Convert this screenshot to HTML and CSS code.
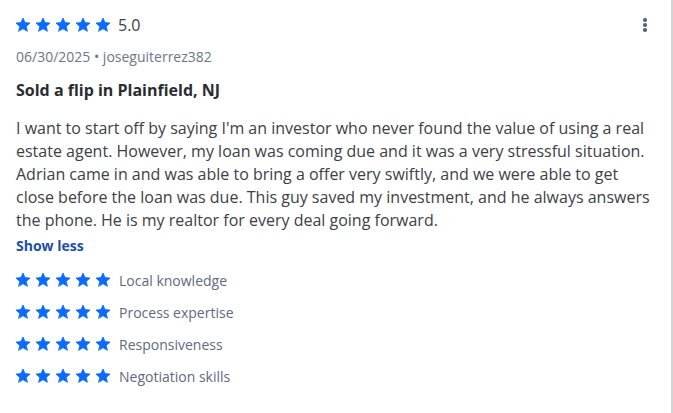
FILE: index.html
```html
<!DOCTYPE html>
<html>
<head>
<meta charset="utf-8">
<link rel="stylesheet" href="styles.css">
</head>
<body>
<div class="card">
  <svg width="0" height="0" class="defs">
    <defs>
      <symbol id="star" viewBox="0 0 24 24">
        <path d="M12 1.5l3.1 6.9 7.4.7-5.6 5 1.7 7.4L12 17.6l-6.6 3.9 1.7-7.4-5.6-5 7.4-.7z" fill="#0b6bff" stroke="#0b6bff" stroke-width="1.2" stroke-linejoin="round"/>
      </symbol>
    </defs>
  </svg>
  <div class="top">
    <div class="stars">
      <svg class="star"><use href="#star"/></svg>
      <svg class="star"><use href="#star"/></svg>
      <svg class="star"><use href="#star"/></svg>
      <svg class="star"><use href="#star"/></svg>
      <svg class="star"><use href="#star"/></svg>
      <span class="score">5.0</span>
    </div>
    <div class="kebab"><span></span><span></span><span></span></div>
  </div>
  <div class="meta">06/30/2025 • joseguiterrez382</div>
  <h2 class="title">Sold a flip in Plainfield, NJ</h2>
  <p class="body">I want to start off by saying I'm an investor who never found the value of using a real estate agent. However, my loan was coming due and it was a very stressful situation. Adrian came in and was able to bring a offer very swiftly, and we were able to get close before the loan was due. This guy saved my investment, and he always answers the phone. He is my realtor for every deal going forward.</p>
  <a class="toggle">Show less</a>
  <ul class="criteria">
    <li><span class="stars"><svg class="star"><use href="#star"/></svg><svg class="star"><use href="#star"/></svg><svg class="star"><use href="#star"/></svg><svg class="star"><use href="#star"/></svg><svg class="star"><use href="#star"/></svg></span><span class="label">Local knowledge</span></li>
    <li><span class="stars"><svg class="star"><use href="#star"/></svg><svg class="star"><use href="#star"/></svg><svg class="star"><use href="#star"/></svg><svg class="star"><use href="#star"/></svg><svg class="star"><use href="#star"/></svg></span><span class="label">Process expertise</span></li>
    <li><span class="stars"><svg class="star"><use href="#star"/></svg><svg class="star"><use href="#star"/></svg><svg class="star"><use href="#star"/></svg><svg class="star"><use href="#star"/></svg><svg class="star"><use href="#star"/></svg></span><span class="label">Responsiveness</span></li>
    <li><span class="stars"><svg class="star"><use href="#star"/></svg><svg class="star"><use href="#star"/></svg><svg class="star"><use href="#star"/></svg><svg class="star"><use href="#star"/></svg><svg class="star"><use href="#star"/></svg></span><span class="label">Negotiation skills</span></li>
  </ul>
</div>
</body>
</html>
```
FILE: styles.css
```css
html, body {
  margin: 0;
  padding: 0;
  background: #fff;
}
body {
  font-family: "Open Sans", "Noto Sans", sans-serif;
  color: #3d4047;
}
.defs {
  position: absolute;
  width: 0;
  height: 0;
}
.card {
  box-sizing: border-box;
  width: 673px;
  height: 413px;
  border-right: 2px solid #d4d4d4;
  padding: 13px 0 0 15px;
}
.top {
  display: flex;
  align-items: center;
  justify-content: space-between;
  height: 24px;
  padding-right: 15px;
}
.stars {
  display: flex;
  align-items: center;
  gap: 4px;
}
.star {
  width: 16px;
  height: 16px;
  display: block;
}
.score {
  margin-left: 3px;
  font-size: 16px;
  color: #3d4047;
}
.kebab {
  display: flex;
  flex-direction: column;
  gap: 1.5px;
  width: 16px;
  align-items: center;
  margin-right: 3px;
}
.kebab span {
  width: 3.5px;
  height: 3.5px;
  border-radius: 50%;
  background: #56647a;
}
.meta {
  margin-top: 10px;
  padding-left: 1px;
  font-size: 14px;
  line-height: 20px;
  color: #6a768a;
}
.title {
  margin: 12px 0 0;
  padding-left: 1px;
  font-size: 16px;
  line-height: 22px;
  font-weight: 700;
  color: #2a2c31;
}
.body {
  margin: 16px 0 0;
  padding-left: 1px;
  width: 636px;
  font-size: 16px;
  line-height: 23px;
  color: #3d4047;
}
.toggle {
  display: block;
  margin-top: 4px;
  padding-left: 1px;
  font-size: 14px;
  line-height: 20px;
  font-weight: 700;
  color: #1c4fa8;
}
.criteria {
  list-style: none;
  margin: 14px 0 0;
  padding: 0;
  display: flex;
  flex-direction: column;
  gap: 12px;
}
.criteria li {
  display: flex;
  align-items: center;
  height: 20px;
}
.label {
  margin-left: 8px;
  font-size: 14px;
  color: #5d6a80;
}
```
